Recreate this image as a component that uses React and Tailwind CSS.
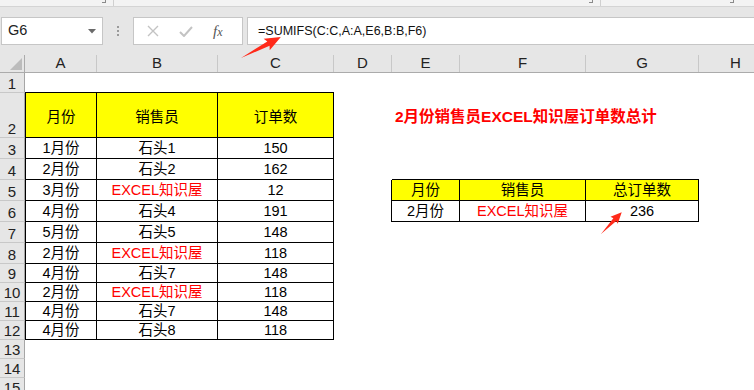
import React from 'react';

const FONT = "font-['Liberation_Sans','Noto_Sans_CJK_SC',sans-serif]";

const colWidths = ['w-[25px]', 'w-[72px]', 'w-[121px]', 'w-[116px]', 'w-[58px]', 'w-[68px]', 'w-[126px]', 'w-[113px]', 'w-[74px]'];
const letters = ['', 'A', 'B', 'C', 'D', 'E', 'F', 'G', 'H'];
const rowHeights = {
  1: 'h-[20px]', 2: 'h-[45px]', 3: 'h-[21px]', 4: 'h-[21px]', 5: 'h-[21px]', 6: 'h-[21px]', 7: 'h-[21px]', 8: 'h-[21px]',
  9: 'h-[19px]', 10: 'h-[19px]', 11: 'h-[19px]', 12: 'h-[19px]', 13: 'h-[19px]', 14: 'h-[19px]', 15: 'h-[19px]',
};

const RED = 'EXCEL知识屋';
const orders = [
  ['1月份', '石头1', '150'],
  ['2月份', '石头2', '162'],
  ['3月份', RED, '12'],
  ['4月份', '石头4', '191'],
  ['5月份', '石头5', '148'],
  ['2月份', RED, '118'],
  ['4月份', '石头7', '148'],
  ['2月份', RED, '118'],
  ['4月份', '石头7', '148'],
  ['4月份', '石头8', '118'],
];

// what sits in a cell: text, red?, yellow?
const cellContent = (r, c) => {
  if (r === 2 && c >= 1 && c <= 3) return { text: ['月份', '销售员', '订单数'][c - 1], fill: true };
  if (r >= 3 && r <= 12 && c >= 1 && c <= 3) {
    const text = orders[r - 3][c - 1];
    return { text, red: text === RED };
  }
  if (r === 5 && c >= 5 && c <= 7) return { text: ['月份', '销售员', '总订单数'][c - 5], fill: true };
  if (r === 6 && c >= 5 && c <= 7) {
    const text = ['2月份', RED, '236'][c - 5];
    return { text, red: text === RED };
  }
  return null;
};

const borderFor = (r, c) => {
  const b = (r >= 1 && r <= 12 && c >= 1 && c <= 3) || (r >= 4 && r <= 6 && c >= 5 && c <= 7);
  const rr = (r >= 2 && r <= 12 && c >= 1 && c <= 3) || (r >= 5 && r <= 6 && c >= 4 && c <= 7);
  const l = r >= 2 && r <= 12 && c === 1;
  return [b ? 'border-b' : '', rr ? 'border-r' : '', l ? 'border-l' : ''].join(' ');
};

const Cell = ({ r, c }) => {
  const content = cellContent(r, c);
  return (
    <div
      className={`${colWidths[c]} shrink-0 h-full border-black ${borderFor(r, c)} ${content?.fill ? 'bg-[#ffff00]' : 'bg-white'} flex items-center justify-center ${r === 2 ? 'pt-[5px]' : 'pt-[2px]'} text-[14.5px] ${content?.red ? 'text-[#ff0000]' : 'text-black'}`}
    >
      {content?.text}
    </div>
  );
};

const Row = ({ r }) => (
  <div className={`flex ${rowHeights[r]}`}>
    <div className="w-[25px] shrink-0 h-full bg-[#e6e6e6] border-r border-b border-r-[#a6a6a6] border-b-[#c8c8c8] flex items-end justify-center text-[15px] leading-[17px] text-[#222]">
      {r}
    </div>
    {[1, 2, 3, 4].map((c) => (
      <Cell key={c} r={r} c={c} />
    ))}
    {r === 2 ? (
      <div className="w-[68px] shrink-0 h-full bg-white relative">
        <span className="absolute left-[3px] top-[12px] whitespace-nowrap text-[15.5px] font-bold text-[#ff0000]">
          2月份销售员EXCEL知识屋订单数总计
        </span>
      </div>
    ) : (
      <Cell r={r} c={5} />
    )}
    {[6, 7, 8].map((c) => (
      <Cell key={c} r={r} c={c} />
    ))}
  </div>
);

const Arrows = () => (
  <svg className="absolute inset-0 pointer-events-none" width="754" height="390">
    <g transform="translate(241 58) rotate(-27.7)" fill="#ff2a1a">
      <polygon points="0,0 31,-2.4 29,-6.5 45,0 29,6.5 31,2.4" />
    </g>
    <g transform="translate(601 234) rotate(-46.3)" fill="#ff2a1a">
      <polygon points="0,0 20,-2 19,-5 30,0 19,5 20,2" />
    </g>
  </svg>
);

export default function App() {
  return (
    <div className={`relative w-[754px] h-[390px] overflow-hidden bg-white ${FONT}`}>
      {/* ribbon edge */}
      <div className="h-[7px] bg-[#f3f3f3] border-b border-[#d4d4d4] relative">
        <div className="absolute left-[102px] top-0 w-[4px] h-[3px] border-r border-b border-[#8a8a8a]" />
        <div className="absolute left-[113px] top-0 w-px h-[6px] bg-[#d0d0d0]" />
        <div className="absolute left-[589px] top-0 w-[4px] h-[3px] border-r border-b border-[#8a8a8a]" />
        <div className="absolute left-[600px] top-0 w-px h-[6px] bg-[#d0d0d0]" />
        <div className="absolute left-[730px] top-0 w-[4px] h-[3px] border-r border-b border-[#8a8a8a]" />
      </div>

      {/* formula bar */}
      <div className="h-[48px] bg-[#e6e6e6] flex items-start pt-[10px]">
        <div className="ml-[1px] w-[102px] h-[28px] bg-white border border-[#c6c6c6] flex items-center justify-between pl-[6px] pr-[6px] text-[14.5px] text-[#222]">
          <span>G6</span>
          <svg width="8" height="5" viewBox="0 0 8 5">
            <polygon points="0,0 8,0 4,4.5" fill="#6a6a6a" />
          </svg>
        </div>
        <div className="w-[30px] h-[28px] flex flex-col items-center justify-center gap-[2px]">
          <span className="w-[2px] h-[2px] bg-[#9a9a9a]" />
          <span className="w-[2px] h-[2px] bg-[#9a9a9a]" />
          <span className="w-[2px] h-[2px] bg-[#9a9a9a]" />
        </div>
        <div className="w-[110px] h-[28px] bg-white border border-[#c6c6c6] flex items-center">
          <svg className="ml-[13px]" width="12" height="12" viewBox="0 0 12 12">
            <path d="M1 1 L11 11 M11 1 L1 11" stroke="#c3c3c3" strokeWidth="1.4" />
          </svg>
          <svg className="ml-[20px]" width="14" height="11" viewBox="0 0 14 11">
            <path d="M1 6 L5 10 L13 1" stroke="#c3c3c3" strokeWidth="2" fill="none" />
          </svg>
          <span className="ml-[20px] font-['Liberation_Serif',serif] italic text-[15px] text-[#555] leading-none">
            f<span className="text-[12px]">x</span>
          </span>
        </div>
        <div className="ml-[4px] flex-1 h-[28px] bg-white border border-r-0 border-[#c6c6c6] flex items-center pl-[10px] text-[12.5px] text-[#111]">
          =SUMIFS(C:C,A:A,E6,B:B,F6)
        </div>
      </div>

      {/* column headers */}
      <div className="flex h-[18px] bg-[#e6e6e6] border-b border-[#ababab]">
        {letters.map((l, i) => (
          <div
            key={i}
            className={`${colWidths[i]} shrink-0 h-full border-r ${i === 0 ? 'border-[#ababab] relative' : 'border-[#c8c8c8]'} flex items-center justify-center text-[15px] text-[#222]`}
          >
            {i === 0 ? (
              <svg className="absolute right-[2px] bottom-[2px]" width="12" height="12" viewBox="0 0 12 12">
                <polygon points="12,0 12,12 0,12" fill="#bcbcbc" />
              </svg>
            ) : (
              l
            )}
          </div>
        ))}
      </div>

      {/* sheet rows */}
      {Array.from({ length: 15 }, (_, i) => (
        <Row key={i + 1} r={i + 1} />
      ))}

      <Arrows />
    </div>
  );
}
